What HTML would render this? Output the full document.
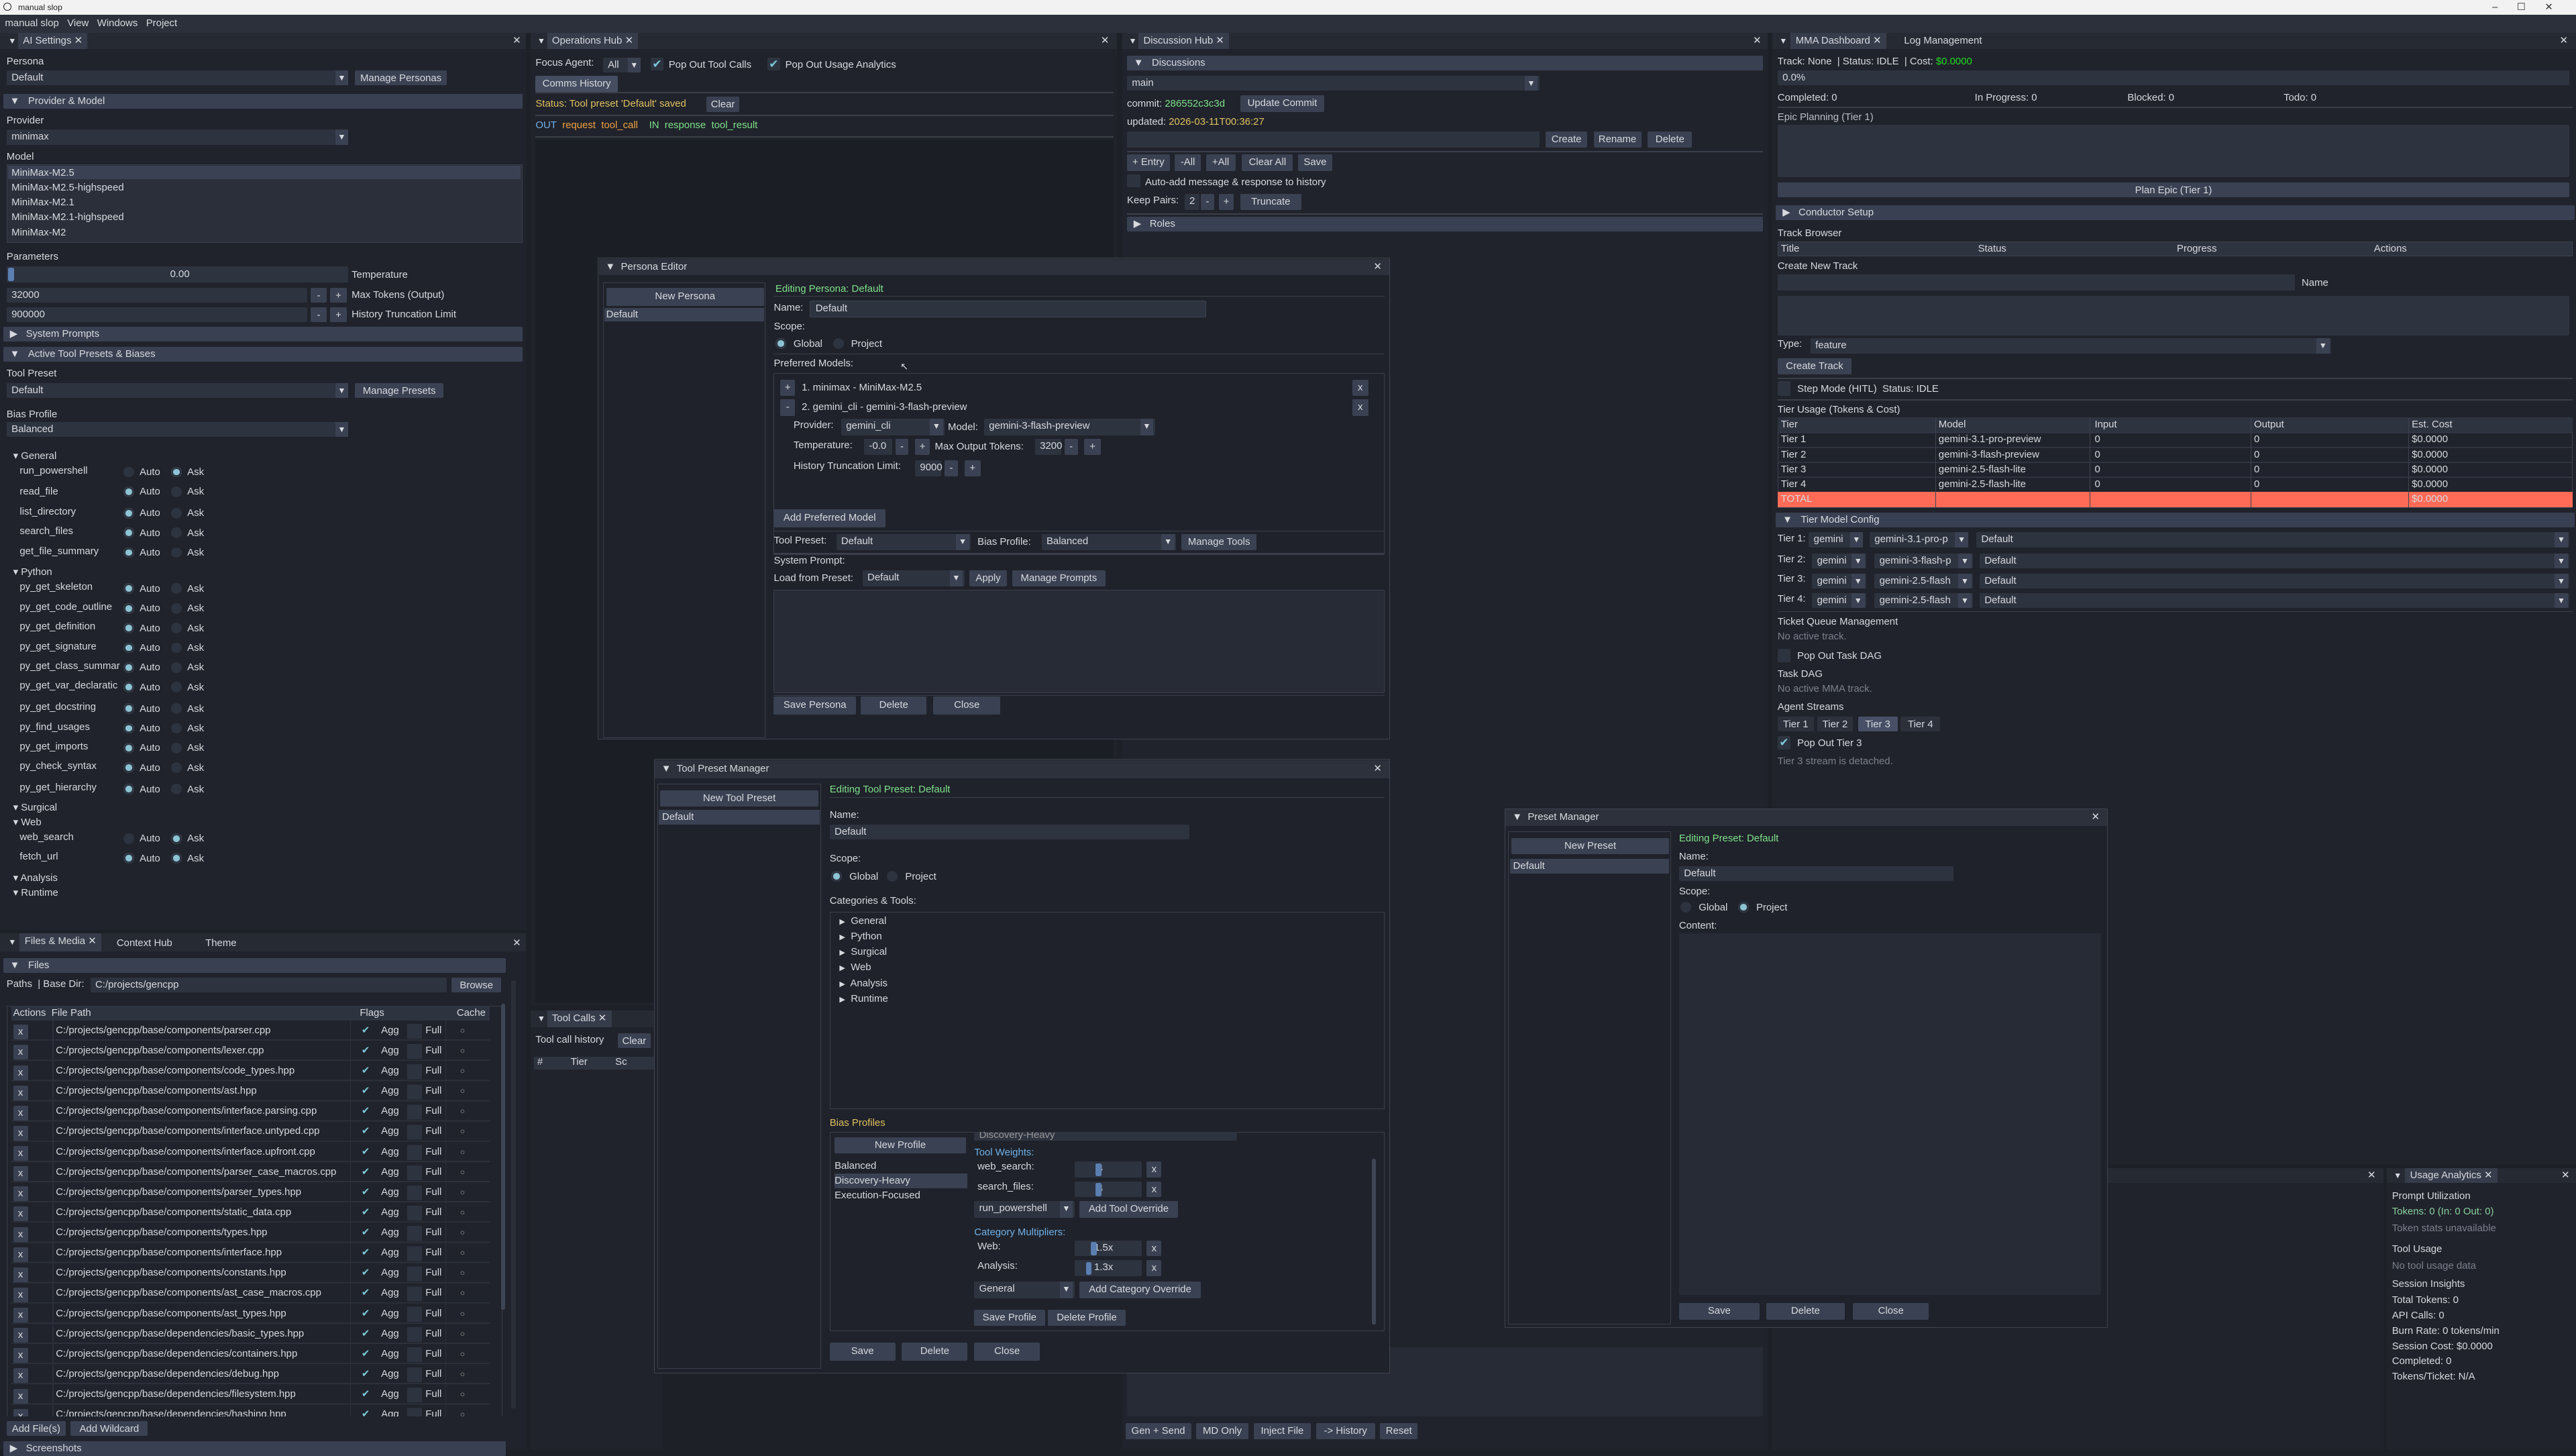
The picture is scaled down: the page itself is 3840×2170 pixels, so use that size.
<!DOCTYPE html>
<html><head><meta charset="utf-8"><style>
*{margin:0;padding:0;box-sizing:border-box}
html,body{width:3840px;height:2160px;overflow:hidden;background:#1d2027}
#z{position:absolute;left:0;top:0;width:1568px;height:882px;zoom:2.44898;font-family:"Liberation Sans",sans-serif;font-size:6.1px;color:#d6d9de;background:#1d2027}
#z div{position:absolute;white-space:nowrap}
.t{line-height:9px;height:9px}
.f{background:#2e3340;border-radius:.8px;line-height:9px;padding-left:3px}
.b{background:#3a4152;border-radius:.8px;line-height:9.5px;text-align:center}
.h{background:#394052;border-radius:.8px;line-height:9px;padding-left:4px}
.w{background:#1f222a;border:.5px solid #3d4350}
.tb{background:#2c313c;line-height:10px;padding-left:4px}
.tab{background:#363c4a;line-height:10px;padding:0 3px}
.g{color:#7ee08a}.y{color:#e0c060}.bl{color:#6fb0e8}.dim{color:#7a808c}.o{color:#f0a040}
.r{width:6.5px;height:6.5px;border-radius:50%;background:#2e3340}
.rs{background:#8cc4d4;box-shadow:0 0 0 1.2px #2e3340 inset}
.cb{width:8px;height:8px;background:#2e3340;border-radius:.8px;color:#7cc8d8;font-size:7px;line-height:8px;text-align:center}
.sep{height:.6px;background:#3a3f4b}
.dd{background:#3a4152;width:8px;line-height:9px;text-align:center;font-size:5px}
.bx{border:.5px solid #3a3f4b}
</style></head><body><div id="z">

<!-- title bar -->
<div style="left:0;top:0;width:1568px;height:9px;background:#f2f2f2;color:#222;font-size:5px;line-height:9px;padding-left:11px">manual slop</div>
<div style="left:2px;top:1.5px;width:5px;height:5px;border:.7px solid #222;border-radius:50%"></div>
<div style="left:1517px;top:0;color:#333;font-size:6px;line-height:9px">–&nbsp;&nbsp;&nbsp;&nbsp;&nbsp;&nbsp;&nbsp;☐&nbsp;&nbsp;&nbsp;&nbsp;&nbsp;&nbsp;&nbsp;✕</div>
<!-- menu -->
<div style="left:0;top:9px;width:1568px;height:11px;background:#2b303b;line-height:11px;padding-left:3px">manual slop&nbsp;&nbsp;&nbsp;View&nbsp;&nbsp;&nbsp;Windows&nbsp;&nbsp;&nbsp;Project</div>

<!-- ================= AI Settings ================= -->
<div style="left:0;top:20px;width:320px;height:546px;background:#20232b"></div>
<div style="left:0;top:20px;width:320px;height:10px;background:#262a33"></div>
<div class="t" style="left:5px;top:20.5px;font-size:5px">▼</div>
<div class="tab" style="left:11px;top:20px;height:10px">AI Settings ✕</div>
<div class="t" style="left:312px;top:20.5px">✕</div>
<div class="t" style="left:4px;top:33px">Persona</div>
<div class="f" style="left:4px;top:43px;width:208px;height:9px">Default</div><div class="dd" style="left:204px;top:43px;height:9px">▼</div>
<div class="b" style="left:216px;top:43px;width:56px;height:9px">Manage Personas</div>
<div class="h" style="left:2px;top:57px;width:316px;height:9px">▼&nbsp;&nbsp;&nbsp;Provider &amp; Model</div>
<div class="t" style="left:4px;top:69px">Provider</div>
<div class="f" style="left:4px;top:79px;width:208px;height:9px">minimax</div><div class="dd" style="left:204px;top:79px;height:9px">▼</div>
<div class="t" style="left:4px;top:91px">Model</div>
<div class="bx" style="left:4px;top:100px;width:314px;height:48px;background:#2a2f3a"></div>
<div style="left:5px;top:101px;width:312px;height:8px;background:#3a4152"></div>
<div class="t" style="left:7px;top:101px">MiniMax-M2.5</div>
<div class="t" style="left:7px;top:110px">MiniMax-M2.5-highspeed</div>
<div class="t" style="left:7px;top:119px">MiniMax-M2.1</div>
<div class="t" style="left:7px;top:128px">MiniMax-M2.1-highspeed</div>
<div class="t" style="left:7px;top:137px">MiniMax-M2</div>
<div class="t" style="left:4px;top:152px">Parameters</div>
<div class="f" style="left:4px;top:162px;width:208px;height:10px;text-align:center;line-height:10px">0.00</div>
<div style="left:5px;top:163px;width:3.5px;height:8px;background:#5a7fb0;border-radius:1px"></div>
<div class="t" style="left:214px;top:163px">Temperature</div>
<div class="f" style="left:4px;top:175px;width:183px;height:9px">32000</div>
<div class="b" style="left:189px;top:175px;width:10px;height:9px">-</div><div class="b" style="left:201px;top:175px;width:10px;height:9px">+</div>
<div class="t" style="left:214px;top:175px">Max Tokens (Output)</div>
<div class="f" style="left:4px;top:187px;width:183px;height:9px">900000</div>
<div class="b" style="left:189px;top:187px;width:10px;height:9px">-</div><div class="b" style="left:201px;top:187px;width:10px;height:9px">+</div>
<div class="t" style="left:214px;top:187px">History Truncation Limit</div>
<div class="h" style="left:2px;top:199px;width:316px;height:9px">▶&nbsp;&nbsp;&nbsp;System Prompts</div>
<div class="h" style="left:2px;top:211px;width:316px;height:9px">▼&nbsp;&nbsp;&nbsp;Active Tool Presets &amp; Biases</div>
<div class="t" style="left:4px;top:223px">Tool Preset</div>
<div class="f" style="left:4px;top:233px;width:208px;height:9px">Default</div><div class="dd" style="left:204px;top:233px;height:9px">▼</div>
<div class="b" style="left:216px;top:233px;width:54px;height:9px">Manage Presets</div>
<div class="t" style="left:4px;top:248px">Bias Profile</div>
<div class="f" style="left:4px;top:257px;width:208px;height:9px">Balanced</div><div class="dd" style="left:204px;top:257px;height:9px">▼</div>

<div class="t" style="left:8px;top:273px">▾ General</div>
<div class="t" style="left:8px;top:344px">▾ Python</div>
<div class="t" style="left:8px;top:487px">▾ Surgical</div>
<div class="t" style="left:8px;top:496px">▾ Web</div>
<div class="t" style="left:8px;top:530px">▾ Analysis</div>
<div class="t" style="left:8px;top:539px">▾ Runtime</div>

<div class="t" style="left:12px;top:282px">run_powershell</div><div class="r" style="left:75px;top:284px"></div><div class="t" style="left:85px;top:283px">Auto</div><div class="r rs" style="left:104px;top:284px"></div><div class="t" style="left:114px;top:283px">Ask</div>
<div class="t" style="left:12px;top:295px">read_file</div><div class="r rs" style="left:75px;top:296px"></div><div class="t" style="left:85px;top:295px">Auto</div><div class="r" style="left:104px;top:296px"></div><div class="t" style="left:114px;top:295px">Ask</div>
<div class="t" style="left:12px;top:307px">list_directory</div><div class="r rs" style="left:75px;top:309px"></div><div class="t" style="left:85px;top:308px">Auto</div><div class="r" style="left:104px;top:309px"></div><div class="t" style="left:114px;top:308px">Ask</div>
<div class="t" style="left:12px;top:319px">search_files</div><div class="r rs" style="left:75px;top:321px"></div><div class="t" style="left:85px;top:320px">Auto</div><div class="r" style="left:104px;top:321px"></div><div class="t" style="left:114px;top:320px">Ask</div>
<div class="t" style="left:12px;top:331px">get_file_summary</div><div class="r rs" style="left:75px;top:333px"></div><div class="t" style="left:85px;top:332px">Auto</div><div class="r" style="left:104px;top:333px"></div><div class="t" style="left:114px;top:332px">Ask</div>

<div class="t" style="left:12px;top:353px">py_get_skeleton</div><div class="r rs" style="left:75px;top:355px"></div><div class="t" style="left:85px;top:354px">Auto</div><div class="r" style="left:104px;top:355px"></div><div class="t" style="left:114px;top:354px">Ask</div>
<div class="t" style="left:12px;top:365px">py_get_code_outline</div><div class="r rs" style="left:75px;top:367px"></div><div class="t" style="left:85px;top:366px">Auto</div><div class="r" style="left:104px;top:367px"></div><div class="t" style="left:114px;top:366px">Ask</div>
<div class="t" style="left:12px;top:377px">py_get_definition</div><div class="r rs" style="left:75px;top:379px"></div><div class="t" style="left:85px;top:378px">Auto</div><div class="r" style="left:104px;top:379px"></div><div class="t" style="left:114px;top:378px">Ask</div>
<div class="t" style="left:12px;top:389px">py_get_signature</div><div class="r rs" style="left:75px;top:391px"></div><div class="t" style="left:85px;top:390px">Auto</div><div class="r" style="left:104px;top:391px"></div><div class="t" style="left:114px;top:390px">Ask</div>
<div class="t" style="left:12px;top:401px">py_get_class_summar</div><div class="r rs" style="left:75px;top:403px"></div><div class="t" style="left:85px;top:402px">Auto</div><div class="r" style="left:104px;top:403px"></div><div class="t" style="left:114px;top:402px">Ask</div>
<div class="t" style="left:12px;top:413px">py_get_var_declaratic</div><div class="r rs" style="left:75px;top:415px"></div><div class="t" style="left:85px;top:414px">Auto</div><div class="r" style="left:104px;top:415px"></div><div class="t" style="left:114px;top:414px">Ask</div>
<div class="t" style="left:12px;top:426px">py_get_docstring</div><div class="r rs" style="left:75px;top:428px"></div><div class="t" style="left:85px;top:427px">Auto</div><div class="r" style="left:104px;top:428px"></div><div class="t" style="left:114px;top:427px">Ask</div>
<div class="t" style="left:12px;top:438px">py_find_usages</div><div class="r rs" style="left:75px;top:440px"></div><div class="t" style="left:85px;top:439px">Auto</div><div class="r" style="left:104px;top:440px"></div><div class="t" style="left:114px;top:439px">Ask</div>
<div class="t" style="left:12px;top:450px">py_get_imports</div><div class="r rs" style="left:75px;top:452px"></div><div class="t" style="left:85px;top:451px">Auto</div><div class="r" style="left:104px;top:452px"></div><div class="t" style="left:114px;top:451px">Ask</div>
<div class="t" style="left:12px;top:462px">py_check_syntax</div><div class="r rs" style="left:75px;top:464px"></div><div class="t" style="left:85px;top:463px">Auto</div><div class="r" style="left:104px;top:464px"></div><div class="t" style="left:114px;top:463px">Ask</div>
<div class="t" style="left:12px;top:475px">py_get_hierarchy</div><div class="r rs" style="left:75px;top:477px"></div><div class="t" style="left:85px;top:476px">Auto</div><div class="r" style="left:104px;top:477px"></div><div class="t" style="left:114px;top:476px">Ask</div>
<div class="t" style="left:12px;top:505px">web_search</div><div class="r" style="left:75px;top:507px"></div><div class="t" style="left:85px;top:506px">Auto</div><div class="r rs" style="left:104px;top:507px"></div><div class="t" style="left:114px;top:506px">Ask</div>
<div class="t" style="left:12px;top:517px">fetch_url</div><div class="r rs" style="left:75px;top:519px"></div><div class="t" style="left:85px;top:518px">Auto</div><div class="r rs" style="left:104px;top:519px"></div><div class="t" style="left:114px;top:518px">Ask</div>

<!-- ================= Files & Media ================= -->
<div style="left:0;top:568px;width:320px;height:314px;background:#20232b"></div>
<div style="left:0;top:568px;width:320px;height:11px;background:#262a33"></div>
<div class="t" style="left:5px;top:569px;font-size:5px">▼</div>
<div class="tab" style="left:12px;top:568px;height:11px">Files &amp; Media ✕</div>
<div class="t" style="left:71px;top:569.5px">Context Hub</div>
<div class="t" style="left:125px;top:569.5px">Theme</div>
<div class="t" style="left:312px;top:569.5px">✕</div>
<div class="h" style="left:2px;top:583px;width:306px;height:9px">▼&nbsp;&nbsp;&nbsp;Files</div>
<div class="t" style="left:4px;top:594.5px">Paths&nbsp;&nbsp;|&nbsp;Base Dir:</div>
<div class="f" style="left:55px;top:595px;width:217px;height:9px">C:/projects/gencpp</div>
<div class="b" style="left:275px;top:595px;width:30px;height:9px">Browse</div>
<div class="bx" style="left:4px;top:612px;width:302px;height:251px"></div>
<div style="left:311px;top:597px;width:3px;height:260px;background:#2a2f3a"></div>
<div style="left:305px;top:611px;width:2.5px;height:186px;background:#3e4555;border-radius:1px"></div>
<div style="left:7px;top:612px;width:291px;height:9px;background:#2e3340"></div>
<div class="t" style="left:8px;top:612px">Actions&nbsp;&nbsp;File Path</div>
<div class="t" style="left:219px;top:612px">Flags</div><div class="t" style="left:278px;top:612px">Cache</div>
<div style="left:7px;top:621px;width:291px;height:241px;background:repeating-linear-gradient(#20232b 0 11.5px,#2c303a 11.5px 12.3px)"></div>
<div style="left:32px;top:621px;width:.5px;height:241px;background:#2c303a"></div>
<div style="left:213px;top:621px;width:.5px;height:241px;background:#2c303a"></div>
<div style="left:271px;top:621px;width:.5px;height:241px;background:#2c303a"></div>
<div id="files" style="left:0;top:0">
<div class="t" style="left:8px;top:622px;line-height:12.3px;height:auto;white-space:pre"><span class="b" style="position:static;display:inline-block;width:9px;height:9px;line-height:9px">x</span>
<span class="b" style="position:static;display:inline-block;width:9px;height:9px;line-height:9px">x</span>
<span class="b" style="position:static;display:inline-block;width:9px;height:9px;line-height:9px">x</span>
<span class="b" style="position:static;display:inline-block;width:9px;height:9px;line-height:9px">x</span>
<span class="b" style="position:static;display:inline-block;width:9px;height:9px;line-height:9px">x</span>
<span class="b" style="position:static;display:inline-block;width:9px;height:9px;line-height:9px">x</span>
<span class="b" style="position:static;display:inline-block;width:9px;height:9px;line-height:9px">x</span>
<span class="b" style="position:static;display:inline-block;width:9px;height:9px;line-height:9px">x</span>
<span class="b" style="position:static;display:inline-block;width:9px;height:9px;line-height:9px">x</span>
<span class="b" style="position:static;display:inline-block;width:9px;height:9px;line-height:9px">x</span>
<span class="b" style="position:static;display:inline-block;width:9px;height:9px;line-height:9px">x</span>
<span class="b" style="position:static;display:inline-block;width:9px;height:9px;line-height:9px">x</span>
<span class="b" style="position:static;display:inline-block;width:9px;height:9px;line-height:9px">x</span>
<span class="b" style="position:static;display:inline-block;width:9px;height:9px;line-height:9px">x</span>
<span class="b" style="position:static;display:inline-block;width:9px;height:9px;line-height:9px">x</span>
<span class="b" style="position:static;display:inline-block;width:9px;height:9px;line-height:9px">x</span>
<span class="b" style="position:static;display:inline-block;width:9px;height:9px;line-height:9px">x</span>
<span class="b" style="position:static;display:inline-block;width:9px;height:9px;line-height:9px">x</span>
<span class="b" style="position:static;display:inline-block;width:9px;height:9px;line-height:9px">x</span>
<span class="b" style="position:static;display:inline-block;width:9px;height:9px;line-height:9px">x</span></div>
<div class="t" style="left:34px;top:621px;line-height:12.3px;height:auto;white-space:pre;overflow:hidden;width:179px">C:/projects/gencpp/base/components/parser.cpp
C:/projects/gencpp/base/components/lexer.cpp
C:/projects/gencpp/base/components/code_types.hpp
C:/projects/gencpp/base/components/ast.hpp
C:/projects/gencpp/base/components/interface.parsing.cpp
C:/projects/gencpp/base/components/interface.untyped.cpp
C:/projects/gencpp/base/components/interface.upfront.cpp
C:/projects/gencpp/base/components/parser_case_macros.cpp
C:/projects/gencpp/base/components/parser_types.hpp
C:/projects/gencpp/base/components/static_data.cpp
C:/projects/gencpp/base/components/types.hpp
C:/projects/gencpp/base/components/interface.hpp
C:/projects/gencpp/base/components/constants.hpp
C:/projects/gencpp/base/components/ast_case_macros.cpp
C:/projects/gencpp/base/components/ast_types.hpp
C:/projects/gencpp/base/dependencies/basic_types.hpp
C:/projects/gencpp/base/dependencies/containers.hpp
C:/projects/gencpp/base/dependencies/debug.hpp
C:/projects/gencpp/base/dependencies/filesystem.hpp
C:/projects/gencpp/base/dependencies/hashing.hpp</div>
<div class="t" style="left:220px;top:621px;line-height:12.3px;height:auto;white-space:pre;color:#7cc8d8">✔
✔
✔
✔
✔
✔
✔
✔
✔
✔
✔
✔
✔
✔
✔
✔
✔
✔
✔
✔</div>
<div class="t" style="left:232px;top:621px;line-height:12.3px;height:auto;white-space:pre">Agg
Agg
Agg
Agg
Agg
Agg
Agg
Agg
Agg
Agg
Agg
Agg
Agg
Agg
Agg
Agg
Agg
Agg
Agg
Agg</div>
<div class="t" style="left:259px;top:621px;line-height:12.3px;height:auto;white-space:pre">Full
Full
Full
Full
Full
Full
Full
Full
Full
Full
Full
Full
Full
Full
Full
Full
Full
Full
Full
Full</div>
<div class="t" style="left:280px;top:621px;line-height:12.3px;height:auto;white-space:pre;font-size:5px;color:#aaa">○
○
○
○
○
○
○
○
○
○
○
○
○
○
○
○
○
○
○
○</div>
<div style="left:248px;top:623px;width:9px;height:240px;background:repeating-linear-gradient(#2e3340 0 9px,transparent 9px 12.3px)"></div>
</div>
<div style="left:0;top:862px;width:320px;height:4px;background:#20232b"></div>
<div class="b" style="left:4px;top:865px;width:36px;height:9px">Add File(s)</div>
<div class="b" style="left:43px;top:865px;width:47px;height:9px">Add Wildcard</div>
<div class="h" style="left:2px;top:877px;width:306px;height:9px">▶&nbsp;&nbsp;&nbsp;Screenshots</div>

<!-- ================= Operations Hub ================= -->
<div style="left:323px;top:20px;width:357px;height:592px;background:#20232b"></div>
<div style="left:323px;top:20px;width:357px;height:10px;background:#262a33"></div>
<div class="t" style="left:327px;top:20.5px;font-size:5px">▼</div>
<div class="tab" style="left:333px;top:20px;height:10px">Operations Hub ✕</div>
<div class="t" style="left:670px;top:20.5px">✕</div>
<div class="t" style="left:326px;top:34px">Focus Agent:</div>
<div class="f" style="left:367px;top:35px;width:23px;height:9px">All</div><div class="dd" style="left:382px;top:35px;height:9px">▼</div>
<div class="cb" style="left:396px;top:35px">✔</div><div class="t" style="left:407px;top:35px">Pop Out Tool Calls</div>
<div class="cb" style="left:467px;top:35px">✔</div><div class="t" style="left:478px;top:35px">Pop Out Usage Analytics</div>
<div class="b" style="left:326px;top:46px;width:50px;height:10px;background:#454d60">Comms History</div>
<div class="sep" style="left:326px;top:56px;width:352px"></div>
<div class="t y" style="left:326px;top:59px">Status: Tool preset 'Default' saved</div>
<div class="b" style="left:430px;top:59px;width:20px;height:9px">Clear</div>
<div class="sep" style="left:326px;top:70px;width:352px"></div>
<div class="t" style="left:326px;top:72px"><span class="bl">OUT</span>&nbsp;&nbsp;<span class="o">request&nbsp;&nbsp;tool_call</span>&nbsp;&nbsp;&nbsp;&nbsp;<span class="g">IN&nbsp;&nbsp;response&nbsp;&nbsp;tool_result</span></div>
<div class="sep" style="left:326px;top:83px;width:352px"></div>
<div style="left:326px;top:85px;width:352px;height:525px;background:#1b1e25"></div>

<!-- Tool Calls -->
<div style="left:323px;top:615px;width:80px;height:267px;background:#20232b"></div>
<div style="left:323px;top:615px;width:80px;height:10px;background:#262a33"></div>
<div class="t" style="left:327px;top:615.5px;font-size:5px">▼</div>
<div class="tab" style="left:333px;top:615px;height:10px">Tool Calls ✕</div>
<div class="t" style="left:326px;top:628.5px">Tool call history</div>
<div class="b" style="left:376px;top:629px;width:20px;height:9px">Clear</div>
<div style="left:325px;top:643px;width:75px;height:8px;background:#2e3340"></div>
<div class="t" style="left:327px;top:642px">#&nbsp;&nbsp;&nbsp;&nbsp;&nbsp;&nbsp;&nbsp;&nbsp;&nbsp;&nbsp;Tier&nbsp;&nbsp;&nbsp;&nbsp;&nbsp;&nbsp;&nbsp;&nbsp;&nbsp;&nbsp;Sc</div>

<!-- ================= Discussion Hub ================= -->
<div style="left:683px;top:20px;width:393px;height:862px;background:#20232b"></div>
<div style="left:683px;top:20px;width:393px;height:10px;background:#262a33"></div>
<div class="t" style="left:687px;top:20.5px;font-size:5px">▼</div>
<div class="tab" style="left:693px;top:20px;height:10px">Discussion Hub ✕</div>
<div class="t" style="left:1067px;top:20.5px">✕</div>
<div class="h" style="left:686px;top:34px;width:387px;height:9px">▼&nbsp;&nbsp;&nbsp;Discussions</div>
<div class="f" style="left:686px;top:46px;width:251px;height:9px">main</div><div class="dd" style="left:928px;top:46px;height:9px">▼</div>
<div class="t" style="left:686px;top:59px">commit: <span class="g">286552c3c3d</span></div>
<div class="b" style="left:755px;top:58px;width:51px;height:10px">Update Commit</div>
<div class="t" style="left:686px;top:70px">updated: <span class="y">2026-03-11T00:36:27</span></div>
<div class="f" style="left:686px;top:80px;width:251px;height:10px"></div>
<div class="b" style="left:941px;top:80px;width:25px;height:10px">Create</div>
<div class="b" style="left:970px;top:80px;width:29px;height:10px">Rename</div>
<div class="b" style="left:1003px;top:80px;width:27px;height:10px">Delete</div>
<div class="sep" style="left:686px;top:92px;width:387px"></div>
<div class="b" style="left:686px;top:94px;width:26px;height:10px">+ Entry</div>
<div class="b" style="left:715px;top:94px;width:16px;height:10px">-All</div>
<div class="b" style="left:734px;top:94px;width:18px;height:10px">+All</div>
<div class="b" style="left:756px;top:94px;width:31px;height:10px">Clear All</div>
<div class="b" style="left:790px;top:94px;width:21px;height:10px">Save</div>
<div class="cb" style="left:686px;top:106px"></div><div class="t" style="left:697px;top:106.5px">Auto-add message &amp; response to history</div>
<div class="t" style="left:686px;top:117.5px">Keep Pairs:</div>
<div class="f" style="left:721px;top:118px;width:9px;height:10px">2</div>
<div class="b" style="left:731px;top:118px;width:8px;height:10px">-</div><div class="b" style="left:742px;top:118px;width:9px;height:10px">+</div>
<div class="b" style="left:755px;top:118px;width:37px;height:10px">Truncate</div>
<div class="sep" style="left:686px;top:130px;width:387px"></div>
<div class="h" style="left:686px;top:132px;width:387px;height:9px">▶&nbsp;&nbsp;&nbsp;Roles</div>
<div class="f" style="left:686px;top:820px;width:387px;height:42px;background:#272b35"></div>
<div class="b" style="left:685px;top:866px;width:40px;height:10px">Gen + Send</div>
<div class="b" style="left:728px;top:866px;width:32px;height:10px">MD Only</div>
<div class="b" style="left:763px;top:866px;width:35px;height:10px">Inject File</div>
<div class="b" style="left:801px;top:866px;width:36px;height:10px">-&gt; History</div>
<div class="b" style="left:840px;top:866px;width:23px;height:10px">Reset</div>

<!-- ================= MMA Dashboard ================= -->
<div style="left:1079px;top:20px;width:489px;height:689px;background:#20232b"></div>
<div style="left:1079px;top:20px;width:489px;height:10px;background:#262a33"></div>
<div class="t" style="left:1083px;top:20.5px;font-size:5px">▼</div>
<div class="tab" style="left:1090px;top:20px;height:10px">MMA Dashboard ✕</div>
<div class="t" style="left:1159px;top:20.5px">Log Management</div>
<div class="t" style="left:1558px;top:20.5px">✕</div>
<div class="t" style="left:1082px;top:33px">Track: None&nbsp;&nbsp;|&nbsp;Status: IDLE&nbsp;&nbsp;|&nbsp;Cost: <span style="color:#22dd22">$0.0000</span></div>
<div class="f" style="left:1082px;top:43px;width:482px;height:9px">0.0%</div>
<div class="t" style="left:1082px;top:55px">Completed: 0</div><div class="t" style="left:1202px;top:55px">In Progress: 0</div><div class="t" style="left:1295px;top:55px">Blocked: 0</div><div class="t" style="left:1390px;top:55px">Todo: 0</div>
<div class="sep" style="left:1082px;top:65px;width:484px"></div>
<div class="t" style="left:1082px;top:67px;color:#b8bcc4">Epic Planning (Tier 1)</div>
<div class="f" style="left:1082px;top:76px;width:482px;height:32px"></div>
<div class="b" style="left:1082px;top:111px;width:482px;height:9px">Plan Epic (Tier 1)</div>
<div class="h" style="left:1081px;top:125px;width:486px;height:9px">▶&nbsp;&nbsp;&nbsp;Conductor Setup</div>
<div class="t" style="left:1082px;top:137.5px">Track Browser</div>
<div style="left:1082px;top:147px;width:484px;height:9px;background:#2e3340;border:.5px solid #3d4350"></div>
<div class="t" style="left:1084px;top:147px">Title</div><div class="t" style="left:1204px;top:147px">Status</div><div class="t" style="left:1325px;top:147px">Progress</div><div class="t" style="left:1445px;top:147px">Actions</div>
<div class="t" style="left:1082px;top:157.5px">Create New Track</div>
<div class="f" style="left:1082px;top:167px;width:315px;height:10px"></div><div class="t" style="left:1401px;top:168px">Name</div>
<div class="f" style="left:1082px;top:180px;width:482px;height:24px"></div>
<div class="t" style="left:1082px;top:205px">Type:</div>
<div class="f" style="left:1102px;top:206px;width:317px;height:9px">feature</div><div class="dd" style="left:1410px;top:206px;height:9px">▼</div>
<div class="b" style="left:1082px;top:218px;width:45px;height:10px">Create Track</div>
<div class="sep" style="left:1082px;top:230px;width:484px"></div>
<div class="cb" style="left:1082px;top:232px;height:9px"></div><div class="t" style="left:1094px;top:232.5px">Step Mode (HITL)&nbsp;&nbsp;Status: IDLE</div>
<div class="sep" style="left:1082px;top:243px;width:484px"></div>
<div class="t" style="left:1082px;top:245px">Tier Usage (Tokens &amp; Cost)</div>
<div style="left:1082px;top:254px;width:484px;height:55px;border:.5px solid #3d4350;background:repeating-linear-gradient(#20232b 0 8.5px,#343947 8.5px 9.1px)"></div>
<div style="left:1082px;top:254px;width:484px;height:9px;background:#2e3340"></div>
<div style="left:1082px;top:299.5px;width:484px;height:9px;background:#ff6b57"></div>
<div style="left:1178px;top:254px;width:.5px;height:55px;background:#3d4350"></div>
<div style="left:1272px;top:254px;width:.5px;height:55px;background:#3d4350"></div>
<div style="left:1370px;top:254px;width:.5px;height:55px;background:#3d4350"></div>
<div style="left:1466px;top:254px;width:.5px;height:55px;background:#3d4350"></div>
<div class="t" style="left:1084px;top:254px;line-height:9.1px;height:auto;white-space:pre">Tier
Tier 1
Tier 2
Tier 3
Tier 4
TOTAL</div>
<div class="t" style="left:1180px;top:254px;line-height:9.1px;height:auto;white-space:pre">Model
gemini-3.1-pro-preview
gemini-3-flash-preview
gemini-2.5-flash-lite
gemini-2.5-flash-lite</div>
<div class="t" style="left:1275px;top:254px;line-height:9.1px;height:auto;white-space:pre">Input
0
0
0
0</div>
<div class="t" style="left:1372px;top:254px;line-height:9.1px;height:auto;white-space:pre">Output
0
0
0
0</div>
<div class="t" style="left:1468px;top:254px;line-height:9.1px;height:auto;white-space:pre">Est. Cost
$0.0000
$0.0000
$0.0000
$0.0000
$0.0000</div>
<div class="h" style="left:1081px;top:312px;width:486px;height:9px">▼&nbsp;&nbsp;&nbsp;Tier Model Config</div>
<div class="t" style="left:1082px;top:323.5px">Tier 1:</div><div class="f" style="left:1101px;top:324px;width:33px;height:9px">gemini</div><div class="dd" style="left:1126px;top:324px;height:9px">▼</div><div class="f" style="left:1138px;top:324px;width:60px;height:9px">gemini-3.1-pro-p</div><div class="dd" style="left:1190px;top:324px;height:9px">▼</div><div class="f" style="left:1203px;top:324px;width:361px;height:9px">Default</div><div class="dd" style="left:1555px;top:324px;height:9px">▼</div>
<div class="t" style="left:1082px;top:336px">Tier 2:</div><div class="f" style="left:1103px;top:337px;width:33px;height:9px">gemini</div><div class="dd" style="left:1127px;top:337px;height:9px">▼</div><div class="f" style="left:1141px;top:337px;width:60px;height:9px">gemini-3-flash-p</div><div class="dd" style="left:1192px;top:337px;height:9px">▼</div><div class="f" style="left:1205px;top:337px;width:359px;height:9px">Default</div><div class="dd" style="left:1555px;top:337px;height:9px">▼</div>
<div class="t" style="left:1082px;top:348px">Tier 3:</div><div class="f" style="left:1103px;top:349px;width:33px;height:9px">gemini</div><div class="dd" style="left:1127px;top:349px;height:9px">▼</div><div class="f" style="left:1141px;top:349px;width:60px;height:9px">gemini-2.5-flash</div><div class="dd" style="left:1192px;top:349px;height:9px">▼</div><div class="f" style="left:1205px;top:349px;width:359px;height:9px">Default</div><div class="dd" style="left:1555px;top:349px;height:9px">▼</div>
<div class="t" style="left:1082px;top:360px">Tier 4:</div><div class="f" style="left:1103px;top:361px;width:33px;height:9px">gemini</div><div class="dd" style="left:1127px;top:361px;height:9px">▼</div><div class="f" style="left:1141px;top:361px;width:60px;height:9px">gemini-2.5-flash</div><div class="dd" style="left:1192px;top:361px;height:9px">▼</div><div class="f" style="left:1205px;top:361px;width:359px;height:9px">Default</div><div class="dd" style="left:1555px;top:361px;height:9px">▼</div>
<div class="sep" style="left:1082px;top:372px;width:484px"></div>
<div class="t" style="left:1082px;top:374px">Ticket Queue Management</div>
<div class="t dim" style="left:1082px;top:383px">No active track.</div>
<div class="cb" style="left:1082px;top:395px"></div><div class="t" style="left:1094px;top:395px">Pop Out Task DAG</div>
<div class="t" style="left:1082px;top:406px">Task DAG</div>
<div class="t dim" style="left:1082px;top:415px">No active MMA track.</div>
<div class="t" style="left:1082px;top:426px">Agent Streams</div>
<div class="b" style="left:1082px;top:436px;width:22px;height:9px;background:#2c313c">Tier 1</div>
<div class="b" style="left:1106px;top:436px;width:22px;height:9px;background:#2c313c">Tier 2</div>
<div class="b" style="left:1131px;top:436px;width:24px;height:9px;background:#475066">Tier 3</div>
<div class="b" style="left:1157px;top:436px;width:24px;height:9px;background:#2c313c">Tier 4</div>
<div class="cb" style="left:1082px;top:448px">✔</div><div class="t" style="left:1094px;top:448px">Pop Out Tier 3</div>
<div class="t dim" style="left:1082px;top:459px">Tier 3 stream is detached.</div>

<!-- lower right panel behind -->
<div style="left:1079px;top:711px;width:372px;height:171px;background:#20232b"></div>
<div style="left:1079px;top:711px;width:372px;height:9px;background:#262a33"></div>
<div class="t" style="left:1441px;top:711px">✕</div>
<!-- Usage Analytics -->
<div style="left:1453px;top:711px;width:115px;height:171px;background:#20232b"></div>
<div style="left:1453px;top:711px;width:115px;height:9px;background:#262a33"></div>
<div class="t" style="left:1457px;top:711px;font-size:5px">▼</div>
<div class="tab" style="left:1464px;top:711px;height:9px;line-height:9px">Usage Analytics ✕</div>
<div class="t" style="left:1559px;top:711px">✕</div>
<div class="t" style="left:1456px;top:723.5px">Prompt Utilization</div>
<div class="t" style="left:1456px;top:733px;color:#8ad0a0">Tokens: 0 (In: 0 Out: 0)</div>
<div class="t dim" style="left:1456px;top:743px">Token stats unavailable</div>
<div class="t" style="left:1456px;top:756px">Tool Usage</div>
<div class="t dim" style="left:1456px;top:766px">No tool usage data</div>
<div class="t" style="left:1456px;top:777px">Session Insights</div>
<div class="t" style="left:1456px;top:787px;line-height:9.3px;height:auto;white-space:pre">Total Tokens: 0
API Calls: 0
Burn Rate: 0 tokens/min
Session Cost: $0.0000
Completed: 0
Tokens/Ticket: N/A</div>

<!-- ================= Persona Editor ================= -->
<div class="w" style="left:364px;top:157px;width:482px;height:293px"></div>
<div class="tb" style="left:364.5px;top:157.5px;width:481px;height:10px">▼&nbsp;&nbsp;Persona Editor</div>
<div class="t" style="left:836px;top:158px">✕</div>
<div class="bx" style="left:367px;top:172px;width:99px;height:277px"></div>
<div class="b" style="left:369px;top:175px;width:96px;height:11px;line-height:11px">New Persona</div>
<div style="left:368px;top:187.5px;width:97px;height:8px;background:#3a4152"></div><div class="t" style="left:369px;top:187px">Default</div>
<div class="t g" style="left:472px;top:171.5px">Editing Persona: Default</div>
<div class="sep" style="left:471px;top:180px;width:372px"></div>
<div class="t" style="left:471px;top:183px">Name:</div>
<div class="f" style="left:493px;top:183px;width:241px;height:10px;border:.4px solid #3d4350">Default</div>
<div class="t" style="left:471px;top:194.5px">Scope:</div>
<div class="r rs" style="left:472px;top:206px"></div><div class="t" style="left:483px;top:205px">Global</div>
<div class="r" style="left:507px;top:206px"></div><div class="t" style="left:518px;top:205px">Project</div>
<div class="sep" style="left:471px;top:215px;width:372px"></div>
<div class="t" style="left:471px;top:217px">Preferred Models:</div>
<div class="t" style="left:548px;top:219px;font-size:6px">↖</div>
<div class="bx" style="left:471px;top:227px;width:372px;height:110px"></div>
<div class="b" style="left:475px;top:231px;width:9px;height:10px">+</div><div class="t" style="left:488px;top:231.5px">1. minimax - MiniMax-M2.5</div>
<div class="b" style="left:475px;top:243px;width:9px;height:10px">-</div><div class="t" style="left:488px;top:243.5px">2. gemini_cli - gemini-3-flash-preview</div>
<div class="b" style="left:823px;top:231px;width:10px;height:10px">x</div><div class="b" style="left:823px;top:243px;width:10px;height:10px">x</div>
<div class="t" style="left:483px;top:254.5px">Provider:</div>
<div class="f" style="left:512px;top:255px;width:63px;height:10px">gemini_cli</div><div class="dd" style="left:566px;top:255px;height:10px">▼</div>
<div class="t" style="left:577px;top:255.5px">Model:</div>
<div class="f" style="left:599px;top:255px;width:104px;height:10px">gemini-3-flash-preview</div><div class="dd" style="left:694px;top:255px;height:10px">▼</div>
<div class="t" style="left:483px;top:266.5px">Temperature:</div>
<div class="f" style="left:526px;top:267px;width:17px;height:10px">-0.0</div><div class="b" style="left:545px;top:267px;width:8px;height:10px">-</div><div class="b" style="left:557px;top:267px;width:9px;height:10px">+</div>
<div class="t" style="left:569px;top:267.5px">Max Output Tokens:</div>
<div class="f" style="left:630px;top:267px;width:16px;height:10px">3200</div><div class="b" style="left:648px;top:267px;width:8px;height:10px">-</div><div class="b" style="left:660px;top:267px;width:10px;height:10px">+</div>
<div class="t" style="left:483px;top:279.5px">History Truncation Limit:</div>
<div class="f" style="left:557px;top:280px;width:16px;height:10px">9000</div><div class="b" style="left:575px;top:280px;width:8px;height:10px">-</div><div class="b" style="left:587px;top:280px;width:10px;height:10px">+</div>
<div class="b" style="left:471px;top:310px;width:68px;height:11px;line-height:11px">Add Preferred Model</div>
<div class="sep" style="left:471px;top:323px;width:372px"></div>
<div class="t" style="left:471px;top:324.5px">Tool Preset:</div>
<div class="f" style="left:509px;top:325px;width:82px;height:10px">Default</div><div class="dd" style="left:582px;top:325px;height:10px">▼</div>
<div class="t" style="left:595px;top:325.5px">Bias Profile:</div>
<div class="f" style="left:634px;top:325px;width:82px;height:10px">Balanced</div><div class="dd" style="left:707px;top:325px;height:10px">▼</div>
<div class="b" style="left:719px;top:325px;width:46px;height:10px">Manage Tools</div>
<div class="sep" style="left:471px;top:337px;width:372px"></div>
<div class="t" style="left:471px;top:337px">System Prompt:</div>
<div class="t" style="left:471px;top:347.5px">Load from Preset:</div>
<div class="f" style="left:525px;top:347px;width:62px;height:10px">Default</div><div class="dd" style="left:578px;top:347px;height:10px">▼</div>
<div class="b" style="left:590px;top:347px;width:23px;height:10px">Apply</div>
<div class="b" style="left:616px;top:347px;width:57px;height:10px">Manage Prompts</div>
<div class="f bx" style="left:471px;top:359px;width:372px;height:63px;background:#272b35"></div>
<div class="sep" style="left:471px;top:423px;width:372px"></div>
<div class="b" style="left:471px;top:424px;width:50px;height:11px;line-height:11px">Save Persona</div>
<div class="b" style="left:524px;top:424px;width:40px;height:11px;line-height:11px">Delete</div>
<div class="b" style="left:568px;top:424px;width:41px;height:11px;line-height:11px">Close</div>

<!-- ================= Tool Preset Manager ================= -->
<div class="w" style="left:398px;top:462px;width:448px;height:374px"></div>
<div class="tb" style="left:398.5px;top:462.5px;width:447px;height:11px;line-height:11px">▼&nbsp;&nbsp;Tool Preset Manager</div>
<div class="t" style="left:836px;top:463.5px">✕</div>
<div class="bx" style="left:400px;top:477px;width:100px;height:356px"></div>
<div class="b" style="left:402px;top:481px;width:96px;height:10px">New Tool Preset</div>
<div style="left:401px;top:493px;width:98px;height:9px;background:#3a4152"></div><div class="t" style="left:403px;top:493px">Default</div>
<div class="t g" style="left:505px;top:476px">Editing Tool Preset: Default</div>
<div class="sep" style="left:505px;top:485px;width:338px"></div>
<div class="t" style="left:505px;top:491.5px">Name:</div>
<div class="f" style="left:505px;top:502px;width:219px;height:9px">Default</div>
<div class="t" style="left:505px;top:518px">Scope:</div>
<div class="r rs" style="left:506px;top:530px"></div><div class="t" style="left:517px;top:529px">Global</div>
<div class="r" style="left:540px;top:530px"></div><div class="t" style="left:551px;top:529px">Project</div>
<div class="t" style="left:505px;top:544px">Categories &amp; Tools:</div>
<div class="bx" style="left:505px;top:555px;width:338px;height:120px"></div>
<div class="t" style="left:511px;top:556px;line-height:9.1px;height:auto;white-space:pre"><span style="font-size:4.5px">▶</span>  General
<span style="font-size:4.5px">▶</span>  Python
<span style="font-size:4.5px">▶</span>  Surgical
<span style="font-size:4.5px">▶</span>  Web
<span style="font-size:4.5px">▶</span>  Analysis
<span style="font-size:4.5px">▶</span>  Runtime</div>
<div class="t y" style="left:505px;top:679px">Bias Profiles</div>
<div class="bx" style="left:505px;top:689px;width:338px;height:121px"></div>
<div class="b" style="left:508px;top:692px;width:80px;height:10px">New Profile</div>
<div class="t" style="left:508px;top:705px">Balanced</div>
<div style="left:508px;top:714px;width:81px;height:9px;background:#3a4152"></div><div class="t" style="left:508px;top:714px">Discovery-Heavy</div>
<div class="t" style="left:508px;top:723px">Execution-Focused</div>
<div class="f" style="left:593px;top:689px;width:160px;height:5px;color:#999;line-height:4px;overflow:hidden">Discovery-Heavy</div>
<div class="t bl" style="left:593px;top:697px">Tool Weights:</div>
<div class="t" style="left:595px;top:705.5px">web_search:</div>
<div class="f" style="left:654px;top:707px;width:41px;height:9.5px;padding-left:14px">4</div><div style="left:667px;top:708px;width:3.5px;height:8px;background:#5a7fb0;border-radius:1px"></div>
<div class="b" style="left:698px;top:707px;width:9px;height:9.5px">x</div>
<div class="t" style="left:595px;top:718px">search_files:</div>
<div class="f" style="left:654px;top:719px;width:41px;height:9.5px;padding-left:14px">4</div><div style="left:667px;top:720px;width:3.5px;height:8px;background:#5a7fb0;border-radius:1px"></div>
<div class="b" style="left:698px;top:719px;width:9px;height:9.5px">x</div>
<div class="f" style="left:593px;top:731px;width:61px;height:10px">run_powershell</div><div class="dd" style="left:645px;top:731px;height:10px">▼</div>
<div class="b" style="left:657px;top:731px;width:60px;height:10px">Add Tool Override</div>
<div class="t bl" style="left:593px;top:745.5px">Category Multipliers:</div>
<div class="t" style="left:595px;top:754px">Web:</div>
<div class="f" style="left:654px;top:755px;width:41px;height:9.5px;padding-left:12px">1.5x</div><div style="left:664px;top:756px;width:3.5px;height:8px;background:#5a7fb0;border-radius:1px"></div>
<div class="b" style="left:698px;top:755px;width:9px;height:9.5px">x</div>
<div class="t" style="left:595px;top:766px">Analysis:</div>
<div class="f" style="left:654px;top:767px;width:41px;height:9.5px;padding-left:12px">1.3x</div><div style="left:661px;top:768px;width:3.5px;height:8px;background:#5a7fb0;border-radius:1px"></div>
<div class="b" style="left:698px;top:767px;width:9px;height:9.5px">x</div>
<div class="f" style="left:593px;top:780px;width:61px;height:10px">General</div><div class="dd" style="left:645px;top:780px;height:10px">▼</div>
<div class="b" style="left:657px;top:780px;width:74px;height:10px">Add Category Override</div>
<div class="b" style="left:593px;top:797px;width:43px;height:10px">Save Profile</div>
<div class="b" style="left:638px;top:797px;width:47px;height:10px">Delete Profile</div>
<div style="left:835px;top:705px;width:2.5px;height:101px;background:#3e4555;border-radius:1px"></div>
<div class="b" style="left:505px;top:817px;width:40px;height:11px;line-height:11px">Save</div>
<div class="b" style="left:549px;top:817px;width:40px;height:11px;line-height:11px">Delete</div>
<div class="b" style="left:593px;top:817px;width:40px;height:11px;line-height:11px">Close</div>

<!-- ================= Preset Manager ================= -->
<div class="w" style="left:916px;top:492px;width:367px;height:316px"></div>
<div class="tb" style="left:916.5px;top:492.5px;width:366px;height:10px">▼&nbsp;&nbsp;Preset Manager</div>
<div class="t" style="left:1273px;top:493px">✕</div>
<div class="bx" style="left:918px;top:506px;width:99px;height:300px"></div>
<div class="b" style="left:920px;top:510px;width:96px;height:10px">New Preset</div>
<div style="left:919px;top:522.5px;width:97px;height:9px;background:#3a4152"></div><div class="t" style="left:921px;top:522.5px">Default</div>
<div class="t g" style="left:1022px;top:506px">Editing Preset: Default</div>
<div class="t" style="left:1022px;top:517px">Name:</div>
<div class="f" style="left:1022px;top:527px;width:167px;height:9px">Default</div>
<div class="t" style="left:1022px;top:538px">Scope:</div>
<div class="r" style="left:1023px;top:549px"></div><div class="t" style="left:1034px;top:548px">Global</div>
<div class="r rs" style="left:1058px;top:549px"></div><div class="t" style="left:1069px;top:548px">Project</div>
<div class="t" style="left:1022px;top:559px">Content:</div>
<div class="f" style="left:1022px;top:568px;width:257px;height:220px;background:#272b35"></div>
<div class="b" style="left:1022px;top:793px;width:49px;height:10px">Save</div>
<div class="b" style="left:1075px;top:793px;width:48px;height:10px">Delete</div>
<div class="b" style="left:1128px;top:793px;width:46px;height:10px">Close</div>

</div></body></html>
